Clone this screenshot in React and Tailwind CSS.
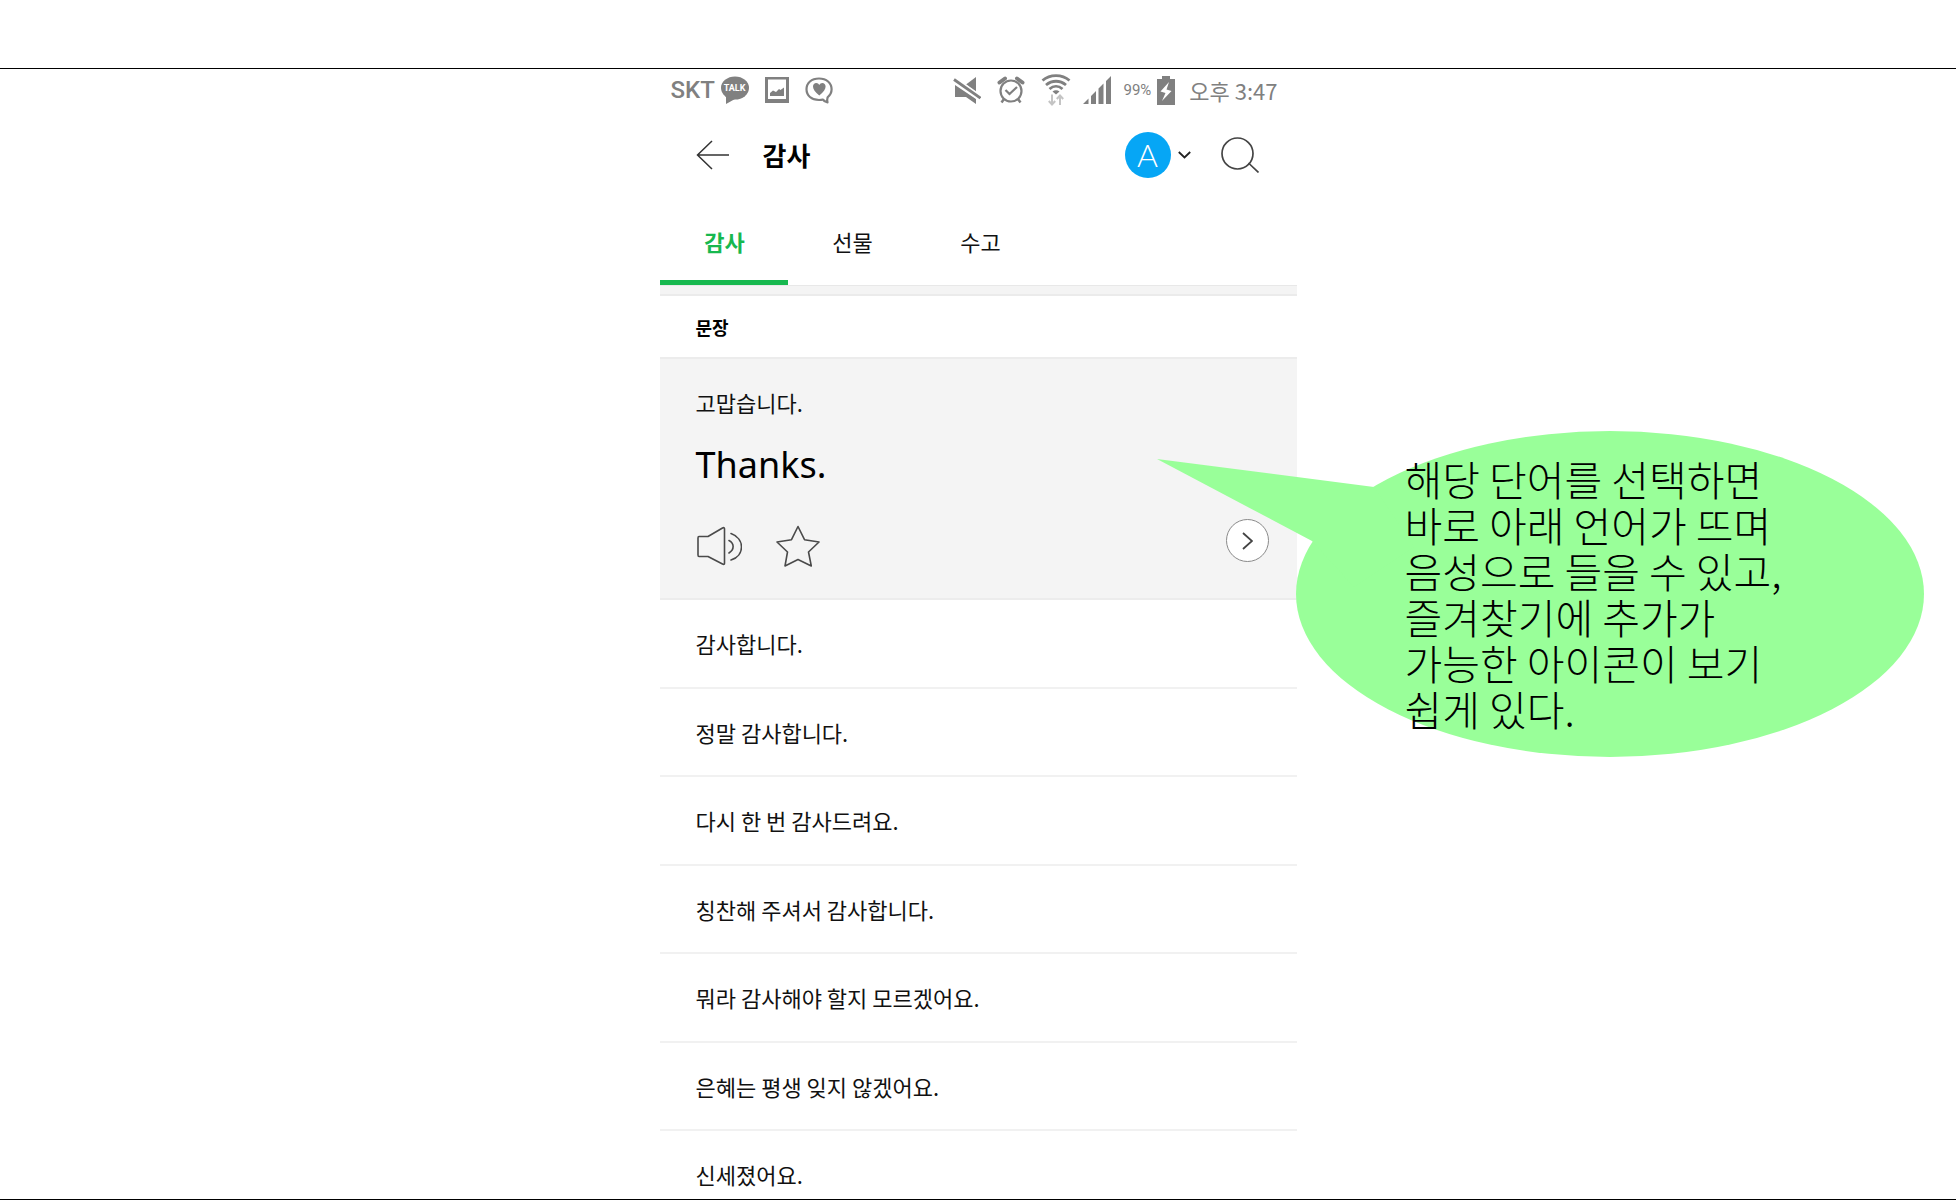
import React from "react";

const phrases = [
  "감사합니다.",
  "정말 감사합니다.",
  "다시 한 번 감사드려요.",
  "칭찬해 주셔서 감사합니다.",
  "뭐라 감사해야 할지 모르겠어요.",
  "은혜는 평생 잊지 않겠어요.",
];

const tabs = ["감사", "선물", "수고"];

const note = `해당 단어를 선택하면
바로 아래 언어가 뜨며
음성으로 들을 수 있고,
즐겨찾기에 추가가
가능한 아이콘이 보기
쉽게 있다.`;

function TalkIcon() {
  return (
    <span className="relative flex h-7 w-7 items-center justify-center">
      <svg className="absolute inset-0" width="28" height="28" viewBox="0 0 28 28" fill="currentColor" aria-hidden="true">
        <ellipse cx="14" cy="12" rx="14" ry="11.5" />
        <path d="M5 19v9l9-5z" />
      </svg>
      <span className="relative pb-1 font-['Roboto',sans-serif] text-[9px] leading-none font-bold text-white">TALK</span>
    </span>
  );
}

function PictureIcon() {
  return (
    <svg width="24" height="26" viewBox="0 0 24 26" fill="currentColor" aria-hidden="true">
      <path fillRule="evenodd" d="M0 0h24v26H0zM3 2.5v19.500h18V2.500z" />
      <path d="M5 19v-3l3-2.500 3 1.500 3-3 1.500 1 3.500-2.500V19z" />
    </svg>
  );
}

function HeartBubbleIcon() {
  return (
    <svg width="28" height="27" viewBox="0 0 28 27" fill="none" aria-hidden="true">
      <path
        d="M14 1.500C6.500 1.500 1.500 6 1.500 12.300S6.500 23 14 23c1.500 0 2.500 0 3.800-.5 1.200 1.700 2.800 2.500 4.700 2.800-.4-1.500-.4-3.400.1-5 2.500-2 4-4.800 4-8C26.500 6 21.500 1.500 14 1.500z"
        stroke="currentColor"
        strokeWidth="2.200"
        strokeLinejoin="round"
      />
      <path d="M14.300 18.500C10 15 8 12.500 8 9.600 8 7.200 9.500 6 11.200 6c1.400 0 2.500.8 3.100 2 .6-1.200 1.700-2 3.100-2 1.700 0 3.200 1.200 3.200 3.600 0 2.900-2 5.400-6.300 8.900z" fill="currentColor" />
    </svg>
  );
}

function MuteIcon() {
  return (
    <svg width="28" height="28" viewBox="0 0 28 28" fill="currentColor" aria-hidden="true">
      <path d="M13 8.500L23 1v15z" />
      <path d="M2 9l21 14v5l-10-7H2z" />
      <path d="M1 3.500L27.500 22" stroke="white" strokeWidth="6" />
      <path d="M1 3.500L27.500 22" stroke="currentColor" strokeWidth="2.800" />
    </svg>
  );
}

function AlarmIcon() {
  return (
    <svg width="28" height="28" viewBox="0 0 28 28" fill="none" stroke="currentColor" aria-hidden="true">
      <circle cx="14" cy="15" r="10.500" strokeWidth="2.200" />
      <path d="M2.500 6.500L8 2.500M25.500 6.500L20 2.500" strokeWidth="4" strokeLinecap="round" />
      <path d="M8.500 14l4 4 7.500-7" strokeWidth="2.200" />
      <path d="M7 23l-2.500 3.500M21 23l2.500 3.500" strokeWidth="2.500" />
    </svg>
  );
}

function WifiIcon() {
  return (
    <svg width="30" height="32" viewBox="0 0 30 32" fill="none" stroke="currentColor" strokeWidth="2.800" aria-hidden="true">
      <path d="M1.500 6.500C9 0 21 0 28.500 6.500M5 11c6-5 14-5 20 0M8.500 15c4-3.500 9-3.500 13 0" />
      <path d="M11.500 17.500c2-1.600 5-1.600 7 0L15 20.500z" fill="currentColor" stroke="none" />
      <g stroke="#c4c4c4" strokeWidth="2">
        <path d="M11 20.500v10M7.800 27l3.200 3.500 3.200-3.500M19 31V21.500M15.800 25l3.200-3.500 3.200 3.500" />
      </g>
    </svg>
  );
}

function SignalIcon() {
  return (
    <svg width="28" height="28" viewBox="0 0 28 28" fill="currentColor" aria-hidden="true">
      <path d="M0 28l5.500-5.500V28zM8 28v-8l5-5v13zM15.500 28V12.500l5-5V28zM23 28V5l5-5v28z" />
    </svg>
  );
}

function BatteryIcon() {
  return (
    <svg width="18" height="29" viewBox="0 0 18 29" fill="currentColor" aria-hidden="true">
      <path d="M5 0h8v3h5v26H0V3h5z" />
      <path d="M12 6L3.500 15.500l5 1.500L5 25l9.500-10-5-1.500z" fill="white" />
    </svg>
  );
}

function StatusBar() {
  return (
    <div className="flex h-10 items-center pt-0.5 pr-[19px] pl-[11px] text-[#808080]">
      <div className="flex items-center">
        <span className="w-[50px] font-['Roboto',sans-serif] text-2xl leading-7 font-medium">SKT</span>
        <span className="mr-4"><TalkIcon /></span>
        <span className="mr-4"><PictureIcon /></span>
        <HeartBubbleIcon />
      </div>
      <div className="ml-auto flex items-center">
        <span className="mr-4"><MuteIcon /></span>
        <span className="mr-4"><AlarmIcon /></span>
        <span className="mr-3"><WifiIcon /></span>
        <span className="mr-3"><SignalIcon /></span>
        <span className="mr-1.5 font-['Roboto',sans-serif] text-[15px] leading-5">99%</span>
        <span className="mr-3.5"><BatteryIcon /></span>
        <time className="text-[22px] leading-7 whitespace-nowrap">오후 3:47</time>
      </div>
    </div>
  );
}

function TitleBar() {
  return (
    <header className="flex h-[92px] items-center pr-[38px] pl-9">
      <button type="button" aria-label="뒤로" className="mr-[34px]">
        <svg width="33" height="30" viewBox="0 0 33 30" fill="none" stroke="#333" strokeWidth="1.500">
          <path d="M16 1L1.500 15 16 29M1.500 15H33" />
        </svg>
      </button>
      <h1 className="text-[26px] leading-8 font-bold text-black">감사</h1>
      <button type="button" aria-label="언어 선택" className="mr-[30px] ml-auto flex items-center gap-[7px]">
        <span className="flex h-[46px] w-[46px] items-center justify-center rounded-full bg-[#06a6f5] font-['Lato','Roboto',sans-serif] text-[32px] leading-none font-light text-white">
          A
        </span>
        <svg width="13" height="8" viewBox="0 0 13 8" fill="none" stroke="#222" strokeWidth="1.800">
          <path d="M.8 1l5.700 5.500L12.200 1" />
        </svg>
      </button>
      <button type="button" aria-label="검색">
        <svg width="38" height="36" viewBox="0 0 38 36" fill="none" stroke="#444" strokeWidth="1.700">
          <circle cx="16.500" cy="16.500" r="15.500" />
          <path d="M27.500 26L37.500 35.500" />
        </svg>
      </button>
    </header>
  );
}

function Tabs() {
  return (
    <nav role="tablist" className="flex h-[85px] border-b border-[#e8e8e8]">
      {tabs.map((name, i) => (
        <button
          key={name}
          type="button"
          role="tab"
          aria-selected={i === 0}
          className={
            i === 0
              ? "w-32 border-b-[5px] border-[#17b84f] pl-0.5 text-[22px] leading-8 font-bold text-[#17b84f]"
              : "w-32 border-b-[5px] border-transparent pl-0.5 text-[22px] leading-8 text-[#111]"
          }
        >
          {name}
        </button>
      ))}
    </nav>
  );
}

function Note() {
  return (
    <aside className="pointer-events-none absolute top-[72px] left-[497px] w-[767px]">
      <svg className="absolute inset-0" width="767" height="326" viewBox="0 0 767 326" fill="#99ff99" aria-hidden="true">
        <ellipse cx="453" cy="163" rx="314" ry="163" />
        <path d="M0 28l217 28 40 60-60 40-42-46z" />
      </svg>
      <p className="relative pt-6 pl-[248px] font-['Noto_Sans_CJK_KR',sans-serif] text-[41px] leading-[46px] font-light whitespace-pre text-black">
        {note}
      </p>
    </aside>
  );
}

function SelectedPhrase() {
  return (
    <li className="relative border-b-2 border-[#ececec] bg-[#f4f4f4] px-9 pt-[27px] pb-[31px]">
      <p className="text-[22px] leading-8 text-[#111]">고맙습니다.</p>
      <p className="mt-[23px] font-['Noto_Sans',sans-serif] text-[36px] leading-[48px] text-black">Thanks.</p>
      <div className="mt-9 flex items-center">
        <button type="button" aria-label="발음 듣기" className="mr-[34px]">
          <svg width="46" height="42" viewBox="0 0 46 42" fill="none" stroke="#4a4a4a" strokeWidth="1.600" strokeLinejoin="round" strokeLinecap="round">
            <path d="M3 11.500h9L26.500 3q2-1 2 .8v34.400q0 1.800-2 .8L12 31.500H3Q2 31.500 2 30V13q0-1.500 1-1.500z" />
            <path d="M33 15.500c5.500 3 5.500 9 0 12.500M35 8.500c14 5 14 22 0 26.500" />
          </svg>
        </button>
        <button type="button" aria-label="즐겨찾기">
          <svg width="44" height="42" viewBox="0 0 44 42" fill="none" stroke="#4a4a4a" strokeWidth="1.600" strokeLinejoin="round">
            <path d="M22 1.500l6.500 13.200L43 17 32.500 27l2.800 14L22 34.500 9 41l2.500-14L1 17l14.500-2.300z" />
          </svg>
        </button>
        <button type="button" aria-label="자세히 보기" className="-mt-1.5 -mr-2 ml-auto flex h-[43px] w-[43px] items-center justify-center self-start rounded-full border border-[#8a8a8a] bg-white">
          <svg width="11" height="18" viewBox="0 0 11 18" fill="none" stroke="#444" strokeWidth="1.800">
            <path d="M1 1l9 8-9 8" />
          </svg>
        </button>
      </div>
      <Note />
    </li>
  );
}

export default function App() {
  return (
    <div className="flex min-h-screen flex-col bg-white pt-[68px] font-['Noto_Sans_CJK_KR',sans-serif]">
      <div className="flex flex-1 justify-center border-y border-black">
        <main className="flex w-full max-w-[637px] flex-col">
          <StatusBar />
          <TitleBar />
          <Tabs />
          <div className="h-2.5 border-b-2 border-[#ebebeb] bg-[#f4f4f4]" />
          <h2 className="flex h-[63px] items-center border-b-2 border-[#ececec] px-9 text-lg font-bold text-black">문장</h2>
          <ul className="flex flex-1 flex-col">
            <SelectedPhrase />
            {phrases.map((text) => (
              <li key={text} className="flex min-h-[88px] flex-1 items-center border-b-2 border-[#f1f1f1] px-9 text-[22px] leading-8 text-[#111]">
                {text}
              </li>
            ))}
            <li className="px-9 pt-[27px] pb-[9px] text-[22px] leading-8 text-[#111]">신세졌어요.</li>
          </ul>
        </main>
      </div>
    </div>
  );
}
